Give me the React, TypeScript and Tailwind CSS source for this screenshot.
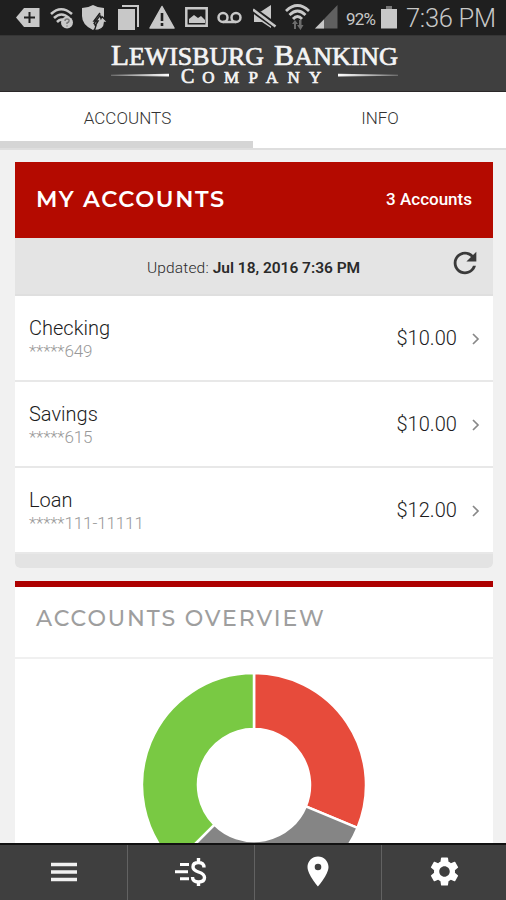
import type { ReactNode } from "react";
import { MdLocationOn, MdRefresh, MdSettings } from "react-icons/md";

const accounts = [
  { name: "Checking", number: "*****649", balance: "$10.00" },
  { name: "Savings", number: "*****615", balance: "$10.00" },
  { name: "Loan", number: "*****111-11111", balance: "$12.00" },
];

function StatusIcon({ width, className = "", children }: { width: number; className?: string; children: ReactNode }) {
  return (
    <svg width={width} height="36" viewBox={`0 0 ${width} 36`} fill="#c8c8c8" className={`shrink-0 ${className}`}>
      {children}
    </svg>
  );
}

function StatusBar() {
  return (
    <div className="flex h-[35px] shrink-0 overflow-hidden bg-[#1f1f1f] pl-4 text-[#c8c8c8]">
      {/* Notification tag */}
      <StatusIcon width={24}>
        <path d="M0 17.5 8 8h15.500v19H8z" />
        <path d="M13.500 12v11M8 17.500h11" stroke="#1f1f1f" strokeWidth="2" />
      </StatusIcon>
      {/* Unknown wifi */}
      <StatusIcon width={24} className="ml-[10px]">
        <g fill="none" stroke="#c8c8c8" strokeWidth="2.6">
          <path d="M1 14Q11 4.500 22 14" />
          <path d="M4 18Q11.500 11 19 18" />
          <path d="M7 22Q11 18 14 21" />
        </g>
        <circle cx="17" cy="22.500" r="6" />
        <path d="M15 21q0-2 2-2 2.500 0 2 2 0 1-2 2v1M17 25.500v1" fill="none" stroke="#777" strokeWidth="1.500" />
      </StatusIcon>
      {/* Shield */}
      <StatusIcon width={28} className="ml-[7px]">
        <path d="M1 8q6 0 11-3 5 3 11 3v8q0 9-11 14Q1 25 1 16z" />
        <path d="M13 30.500q1-1 2-5l-2-2 6-8 1 3 1-2 6 6h-3.500q0 8-10.500 8z" stroke="#1f1f1f" strokeWidth="1.300" />
        <path d="m19 13-6 8h4l-3 5" fill="none" stroke="#1f1f1f" strokeWidth="1.500" />
      </StatusIcon>
      {/* Stacked pages */}
      <StatusIcon width={22} className="ml-[9px]">
        <path d="M4 5h17v22h-2V7H4z" />
        <path d="M0 9h17v21H0z" />
      </StatusIcon>
      {/* Warning */}
      <StatusIcon width={26} className="ml-[9px]">
        <path d="M13 6.500 25 28H1z" stroke="#c8c8c8" strokeWidth="1.500" strokeLinejoin="round" />
        <path d="M13 13v8M13 23v3" stroke="#1f1f1f" strokeWidth="2.600" />
      </StatusIcon>
      {/* Picture */}
      <StatusIcon width={24} className="ml-[10px]">
        <path d="M1.300 8.300h20.400v17.400H1.300z" fill="none" stroke="#c8c8c8" strokeWidth="2.500" />
        <path d="M4 23v-4l5-4 4 3 3-2 4 4v3z" />
      </StatusIcon>
      {/* Voicemail */}
      <StatusIcon width={26} className="ml-[8px]">
        <g fill="none" stroke="#c8c8c8" strokeWidth="2.500">
          <circle cx="6" cy="17.500" r="4.500" />
          <circle cx="19" cy="17.500" r="4.500" />
          <path d="M6 22H19" />
        </g>
      </StatusIcon>
      {/* Muted */}
      <StatusIcon width={25} className="ml-[10px]">
        <path d="M1 11.500h7L18 5v23l-9-6H1z" />
        <path d="m-1 9 25 18" stroke="#1f1f1f" strokeWidth="6" />
        <path d="m0 9.500 22.500 17" stroke="#c8c8c8" strokeWidth="2.600" />
      </StatusIcon>
      {/* Wifi */}
      <StatusIcon width={25} className="ml-[7px]">
        <g fill="none" stroke="#c8c8c8" strokeWidth="2.800">
          <path d="M1 11Q12.500 0 24 11" />
          <path d="M4.500 15Q12.500 7 20.500 15" />
          <path d="M8 19Q12.500 14 17 19" />
        </g>
        <path d="m7 24 3-4 3 4h-2v5H9v-5zM12 25h2v-5h2.500v5h2l-3 5z" fill="#6c6c6c" />
      </StatusIcon>
      {/* Signal */}
      <StatusIcon width={24} className="ml-[5px]">
        <path d="M0 28.500 22.500 5v23.500z" fill="#606060" />
        <path d="m0 28.500 9-9v9z" />
      </StatusIcon>
      <span className="ml-[7px] mt-[7px] w-[32px] whitespace-nowrap text-[17px] leading-[24px] tracking-[-0.8px]">92%</span>
      <StatusIcon width={17} className="ml-[3px]">
        <path d="M0 9h16v19.500H0z" />
        <path d="M5 6h6v3H5z" fill="#777" />
      </StatusIcon>
      <span className="ml-[8px] whitespace-nowrap text-[25.5px] font-light leading-[36px] tracking-[-0.3px]">7:36 PM</span>
    </div>
  );
}

function Header() {
  return (
    <header className="flex h-[57px] shrink-0 justify-center border-y border-t-[#353535] border-b-[#2b2829] bg-[#3f3f3f]">
      <svg width="300" height="55" viewBox="103 36 300 55" fill="#f4f4f4" fontFamily="'Liberation Serif', serif">
        <defs>
          <linearGradient id="ruleLeft">
            <stop offset="0" stopColor="#fff" stopOpacity="0.3" />
            <stop offset="1" stopColor="#fff" />
          </linearGradient>
          <linearGradient id="ruleRight">
            <stop offset="0" stopColor="#fff" />
            <stop offset="1" stopColor="#fff" stopOpacity="0.3" />
          </linearGradient>
        </defs>
        <g stroke="#f4f4f4" strokeWidth="0.700">
          <text x="111" y="64.500" fontSize="29" textLength="153" lengthAdjust="spacingAndGlyphs">
            L<tspan fontSize="25.500">EWISBURG</tspan>
          </text>
          <text x="274" y="64.500" fontSize="29" textLength="124" lengthAdjust="spacingAndGlyphs">
            B<tspan fontSize="25.500">ANKING</tspan>
          </text>
          <text x="181" y="83" fontSize="20" letterSpacing="8">
            C<tspan fontSize="17" textLength="127">OMPANY</tspan>
          </text>
        </g>
        <path d="M111 74.700 169 73.800v2.700l-58-0.800z" fill="url(#ruleLeft)" />
        <path d="M338 73.800v2.700l60-0.800v-1z" fill="url(#ruleRight)" />
      </svg>
    </header>
  );
}

function Tabs() {
  return (
    <nav className="flex h-[58px] shrink-0 border-b-2 border-[#dedede] bg-white text-[17px] font-light text-[#333]">
      <button className="h-[56px] w-[253px] border-b-[7px] border-[#d5d5d5] pl-[2px] pt-[4px] tracking-[0.05px]">ACCOUNTS</button>
      <button className="h-[56px] w-[253px] border-b-[7px] border-transparent pl-[1px] pt-[4px]">INFO</button>
    </nav>
  );
}

function AccountsCard() {
  return (
    <section className="overflow-hidden rounded-b-[5px] bg-white">
      <div className="flex h-[76px] items-center justify-between bg-[#b40a00] pl-[21px] pr-[21px] text-white">
        <h2 className="font-['Montserrat','Lato',sans-serif] text-[22.5px] font-semibold tracking-[1.6px]">MY ACCOUNTS</h2>
        <span className="text-[17px] font-medium">3 Accounts</span>
      </div>
      <div className="flex h-[58px] items-center border-b-2 border-[#dfdfdf] bg-[#e4e4e4] text-[#2a2a2a]">
        <p className="flex-1 whitespace-nowrap pl-[132px] pt-[5px] text-[15.5px]">
          <span className="font-light tracking-[0.15px]">Updated: </span>
          <span className="font-semibold tracking-[-0.02px]">Jul 18, 2016 7:36 PM</span>
        </p>
        <MdRefresh className="mb-[6px] mr-[11px] size-[34px] text-[#3a3a3a]" />
      </div>
      {accounts.map((account) => (
        <div key={account.name} className="flex h-[86px] items-center border-b-2 border-[#e8e8e8] pl-[14px] pr-[12px]">
          <div className="flex-1 pt-[2px]">
            <div className="text-[20px] font-light leading-[24px] text-[#1c1c1c]">{account.name}</div>
            <div className="text-[17px] font-light leading-[22px] tracking-[-0.12px] text-[#999]">{account.number}</div>
          </div>
          <span className="text-[20px] font-light tracking-[0.05px] text-[#1c1c1c]">{account.balance}</span>
          <svg width="10" height="14" viewBox="0 0 10 14" fill="none" stroke="#888" strokeWidth="1.700" className="ml-[14px] mt-[2px]">
            <path d="m2 2 5 5-5 5" />
          </svg>
        </div>
      ))}
      <div className="h-[14px] bg-[#e3e3e3]" />
    </section>
  );
}

const slices = [
  { value: 10, color: "#e74b3b" },
  { value: 10, color: "#858585" },
  { value: 12, color: "#79c943" },
];

function DonutChart() {
  const total = slices.reduce((sum, slice) => sum + slice.value, 0);
  const outer = 112;
  const inner = 56;
  let angle = 0;

  const point = (radius: number, a: number) => `${radius * Math.sin(a)} ${-radius * Math.cos(a)}`;

  return (
    <svg width="230" height="230" viewBox="-115 -115 230 230">
      {slices.map((slice) => {
        const start = angle;
        angle += (slice.value / total) * Math.PI * 2;
        return (
          <path
            key={slice.color}
            fill={slice.color}
            stroke="#fff"
            strokeWidth="2.500"
            d={`M${point(outer, start)}A${outer} ${outer} 0 0 1 ${point(outer, angle)}L${point(inner, angle)}A${inner} ${inner} 0 0 0 ${point(inner, start)}Z`}
          />
        );
      })}
    </svg>
  );
}

function OverviewCard() {
  return (
    <section className="mt-[13px] border-t-[6px] border-[#ad0000] bg-white">
      <h2 className="flex h-[72px] items-center border-b-2 border-[#f0f0f0] pb-[7px] pl-[21px] font-['Montserrat','Lato',sans-serif] text-[22px] font-medium tracking-[1.9px] text-[#9e9e9e]">
        ACCOUNTS OVERVIEW
      </h2>
      <div className="flex justify-center pt-[11px]">
        <DonutChart />
      </div>
    </section>
  );
}

function BottomNav() {
  return (
    <nav className="grid h-[57px] shrink-0 grid-cols-[128px_127px_127px_124px] border-t-2 border-[#111] bg-[#3f3f3f] text-white">
      <button className="flex items-center justify-center border-r border-[#626262] pb-[2px]">
        <svg width="28" height="20" viewBox="0 0 28 20" stroke="#f0f0f0" strokeWidth="3.500">
          <path d="M1 2.500h26M1 10h26M1 17.500h26" />
        </svg>
      </button>
      <button className="flex items-center justify-center border-r border-[#626262] pb-[2px]">
        <svg width="32" height="30" viewBox="0 0 32 30" fill="none" stroke="#fff" strokeWidth="3.400">
          <path d="M5 7.500h9M0 14.700h13M5 21.700h9" strokeWidth="3" />
          <path d="M29 10.500q0-5-5.500-5t-5.500 4.500c0 3 2.500 4 5.500 5 3.500 1.200 6 2.500 6 5.500q0 4.500-6 4.500t-6-5M23.500 1v5M23.500 24v5" />
        </svg>
      </button>
      <button className="flex items-center justify-center border-r border-[#626262] pb-[2px]">
        <svg width="22" height="31" viewBox="0 0 22 31" fill="#fff" fillRule="evenodd">
          <path d="M11 .5C5.200.5.500 5.200.500 11c0 7.500 10.500 19.500 10.500 19.500S21.500 18.500 21.500 11C21.500 5.200 16.800.5 11 .5zm0 7.200a3.300 3.300 0 1 1 0 6.600 3.300 3.300 0 0 1 0-6.600z" />
        </svg>
      </button>
      <button className="flex items-center justify-center pb-[2px]">
        <MdSettings className="size-[35px]" />
      </button>
    </nav>
  );
}

export default function App() {
  return (
    <div className="flex h-[900px] w-[506px] flex-col overflow-hidden bg-[#f1f1f1] font-['Roboto',sans-serif]">
      <StatusBar />
      <Header />
      <Tabs />
      <main className="min-h-0 flex-1 overflow-hidden pl-[15px] pr-[13px] pt-[12px]">
        <AccountsCard />
        <OverviewCard />
      </main>
      <BottomNav />
    </div>
  );
}
